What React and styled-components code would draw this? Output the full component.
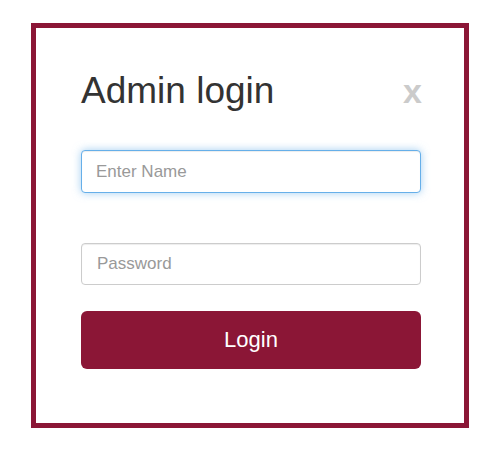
import styled, { createGlobalStyle, css } from 'styled-components';

const GlobalStyle = createGlobalStyle`
  body {
    margin: 0;
    background: #fff;
    font-family: 'Liberation Sans', Arial, sans-serif;
  }
`;

const App = () => {
  return (
    <>
      <GlobalStyle />
      <Page>
        <LoginCard>
          <Header>
            <Title>Admin login</Title>
            <CloseButton type='button'>x</CloseButton>
          </Header>
          <Field $focused type='text' placeholder='Enter Name' />
          <Field $gapTop type='password' placeholder='Password' />
          <LoginButton type='button'>Login</LoginButton>
        </LoginCard>
      </Page>
    </>
  );
};

const Page = styled.div`
  padding: 23px 0 0 31px;
`;

const LoginCard = styled.div`
  box-sizing: border-box;
  width: 438px;
  height: 405px;
  border: 5px solid #8b1636;
  padding: 43px 43px 0 45px;
  display: flex;
  flex-direction: column;
`;

const Header = styled.div`
  display: flex;
  justify-content: space-between;
  align-items: baseline;
  height: 40px;
  margin-bottom: 39px;
`;

const Title = styled.h1`
  margin: 0;
  font-size: 37px;
  line-height: 40px;
  font-weight: 400;
  color: #333;
`;

const CloseButton = styled.button`
  border: none;
  background: none;
  padding: 0;
  margin-right: -1px;
  font-family: inherit;
  font-size: 34px;
  line-height: 40px;
  font-weight: 700;
  color: #cbcbcb;
  cursor: pointer;
`;

const Field = styled.input`
  box-sizing: border-box;
  width: 340px;
  height: ${({ $focused }) => ($focused ? '43px' : '42px')};
  margin-top: ${({ $gapTop }) => ($gapTop ? '50px' : '0')};
  padding: 0 15px;
  border: 1px solid #ccc;
  border-radius: 4px;
  font-family: inherit;
  font-size: 17px;
  color: #555;
  outline: none;
  box-shadow: inset 0 1px 1px rgba(0, 0, 0, 0.075);

  &::placeholder {
    color: #999;
  }

  ${({ $focused }) =>
    $focused &&
    css`
      padding-left: 14px;
      border-color: #66afe9;
      box-shadow: inset 0 1px 1px rgba(0, 0, 0, 0.075),
        0 0 8px rgba(102, 175, 233, 0.6);
    `}
`;

const LoginButton = styled.button`
  margin-top: 26px;
  width: 340px;
  height: 58px;
  border: none;
  border-radius: 6px;
  background: #8b1636;
  color: #fff;
  font-family: inherit;
  font-size: 22px;
  cursor: pointer;
`;

export default App;
